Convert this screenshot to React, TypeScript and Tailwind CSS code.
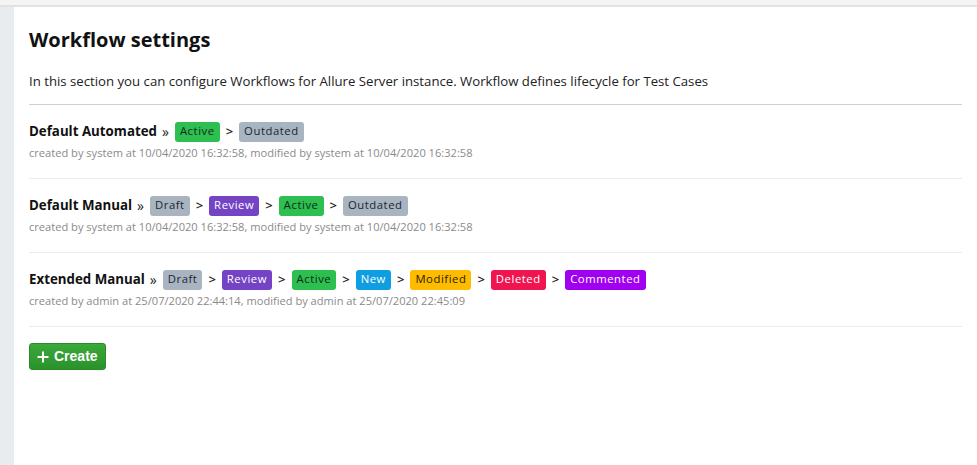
const font = { fontFamily: '"Open Sans", "Noto Sans", sans-serif' };

type Badge = { label: string; cls: string };

const badges: Record<string, Badge> = {
  draft: { label: "Draft", cls: "bg-[#a9b4c1] text-[#1c2530]" },
  review: { label: "Review", cls: "bg-[#7444c4] text-white" },
  active: { label: "Active", cls: "bg-[#2dbf50] text-[#13291a]" },
  outdated: { label: "Outdated", cls: "bg-[#a9b4c1] text-[#1c2530]" },
  new: { label: "New", cls: "bg-[#0f9ee2] text-white" },
  modified: { label: "Modified", cls: "bg-[#ffbb00] text-[#2a2000]" },
  deleted: { label: "Deleted", cls: "bg-[#f01450] text-white" },
  commented: { label: "Commented", cls: "bg-[#a100f0] text-white" },
};

const workflows = [
  {
    name: "Default Automated",
    states: ["active", "outdated"],
    meta: "created by system at 10/04/2020 16:32:58, modified by system at 10/04/2020 16:32:58",
  },
  {
    name: "Default Manual",
    states: ["draft", "review", "active", "outdated"],
    meta: "created by system at 10/04/2020 16:32:58, modified by system at 10/04/2020 16:32:58",
  },
  {
    name: "Extended Manual",
    states: ["draft", "review", "active", "new", "modified", "deleted", "commented"],
    meta: "created by admin at 25/07/2020 22:44:14, modified by admin at 25/07/2020 22:45:09",
  },
];

const App = () => {
  return (
    <div className="min-h-[465px] flex flex-col bg-white" style={font}>
      <div className="h-[5px] bg-[#f4f4f4] border-b-2 border-[#e2e2e2] box-content" />
      <div className="flex flex-1">
        <div className="w-[14px] bg-[#e9ecef]" />
        <div className="flex-1 px-[15px] pt-[19px]">
          <h1 className="text-[20px] font-bold text-[#111] leading-[28px]">Workflow settings</h1>
          <p className="mt-[17px] text-[13.2px] text-[#222] leading-[20px]">
            In this section you can configure Workflows for Allure Server instance. Workflow defines lifecycle for Test Cases
          </p>
          <div className="mt-[13px] border-t border-[#cfcfcf]" />
          {workflows.map((w) => (
            <div key={w.name} className="pt-[16px] pb-[17px] border-b border-[#ececec]">
              <div className="flex items-center h-[21px]">
                <span className="text-[13.3px] font-bold text-[#111]">{w.name}</span>
                <span className="ml-[5px] mr-[6px] text-[14px] text-[#222] leading-none">»</span>
                {w.states.map((s, i) => (
                  <span key={s} className="flex items-center">
                    {i > 0 && <span className="mx-[6px] text-[13px] font-semibold text-[#222]">&gt;</span>}
                    <span className={`h-[20px] px-[5px] flex items-center rounded-[3px] text-[11.3px] tracking-[0.55px] ${badges[s].cls}`}>
                      {badges[s].label}
                    </span>
                  </span>
                ))}
              </div>
              <div className="mt-[3px] text-[11.1px] text-[#8a8a8a] leading-[16px]">{w.meta}</div>
            </div>
          ))}
          <button className="mt-[16px] h-[27px] px-[7px] flex items-center gap-[5px] rounded-[3px] bg-gradient-to-b from-[#3aa83a] to-[#2b922b] border border-[#2a8a2a] text-white text-[14px] font-semibold" style={{ fontFamily: '"Liberation Sans", Arial, sans-serif' }}>
            <svg width="12" height="12" viewBox="0 0 12 12">
              <path d="M6 0.5v11M0.5 6h11" stroke="white" strokeWidth="2" />
            </svg>
            Create
          </button>
        </div>
      </div>
    </div>
  );
};

export default App;
